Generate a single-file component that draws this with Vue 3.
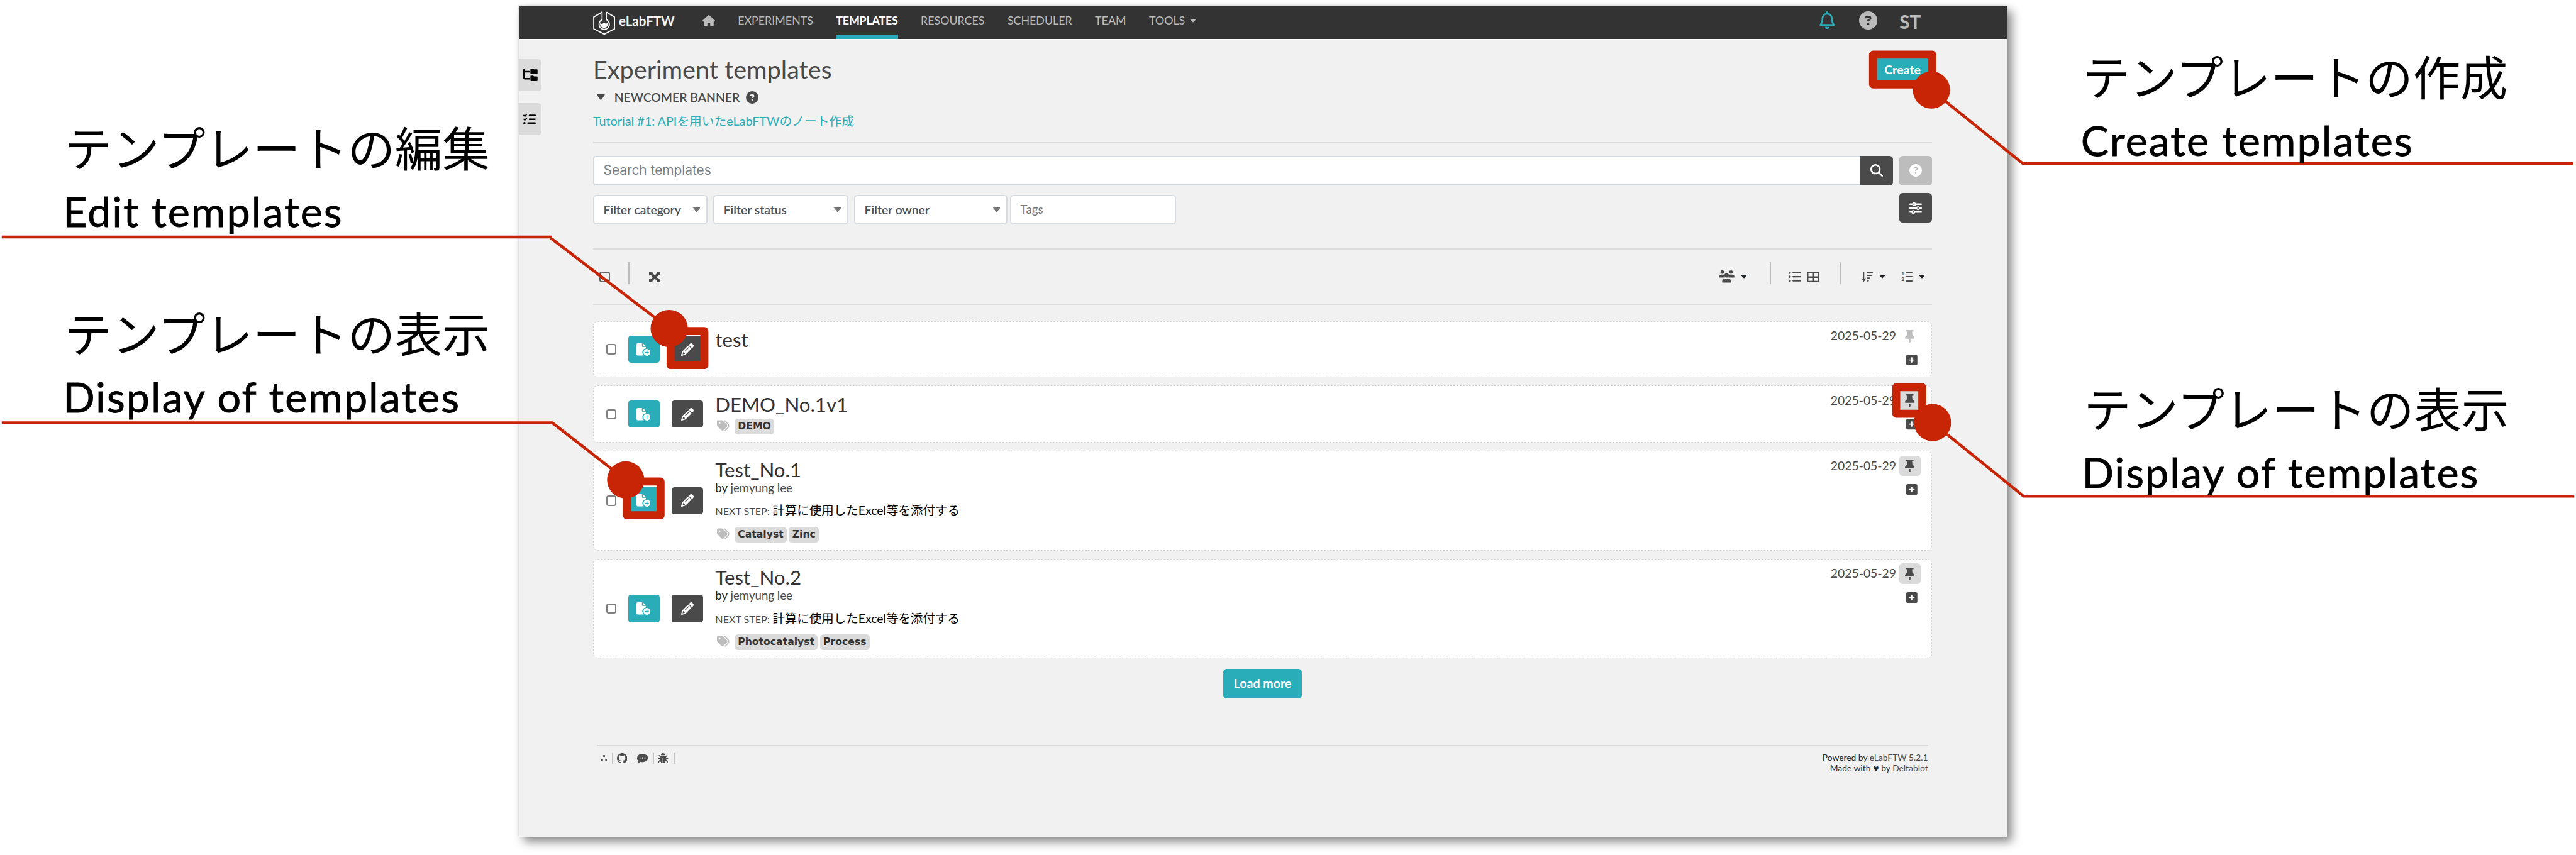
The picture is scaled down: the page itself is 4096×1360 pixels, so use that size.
<script setup>
import { h } from 'vue'

const paths = {
  home: ['0 0 576 512', 'M575.8 255.5c0 18-15 32.1-32 32.1l-32 0 .7 160.2c0 2.7-.2 5.4-.5 8.1l0 16.2c0 22.1-17.9 40-40 40l-16 0c-1.1 0-2.2 0-3.3-.1c-1.4 .1-2.8 .1-4.2 .1L416 512l-24 0c-22.1 0-40-17.9-40-40l0-24 0-64c0-17.7-14.3-32-32-32l-64 0c-17.7 0-32 14.3-32 32l0 64 0 24c0 22.1-17.9 40-40 40l-24 0-31.9 0c-1.5 0-3-.1-4.5-.2c-1.2 .1-2.4 .2-3.6 .2l-16 0c-22.1 0-40-17.9-40-40l0-112c0-.9 0-1.9 .1-2.8l0-69.7-32 0c-18 0-32-14-32-32.1c0-9 3-17 10-24L266.4 8c7-7 15-8 22-8s15 2 21 7L564.8 231.5c8 7 12 15 11 24z'],
  help: ['0 0 512 512', 'M256 512A256 256 0 1 0 256 0a256 256 0 1 0 0 512zM169.8 165.3c7.9-22.3 29.1-37.3 52.8-37.3l58.3 0c34.9 0 63.1 28.3 63.1 63.1c0 22.6-12.1 43.5-31.7 54.8L280 264.4c-.2 13-10.9 23.6-24 23.6c-13.3 0-24-10.7-24-24l0-13.5c0-8.6 4.6-16.5 12.1-20.8l44.3-25.4c4.7-2.7 7.6-7.7 7.6-13.1c0-8.4-6.8-15.1-15.1-15.1l-58.3 0c-3.4 0-6.4 2.1-7.5 5.3l-.4 1.2c-4.4 12.5-18.2 19-30.6 14.6s-19-18.2-14.6-30.6l.4-1.2zM224 352a32 32 0 1 1 64 0 32 32 0 1 1 -64 0z'],
  search: ['0 0 512 512', 'M416 208c0 45.9-14.9 88.3-40 122.7L502.6 457.4c12.5 12.5 12.5 32.8 0 45.3s-32.8 12.5-45.3 0L330.7 376c-34.4 25.2-76.8 40-122.7 40C93.1 416 0 322.9 0 208S93.1 0 208 0S416 93.1 416 208zM208 352a144 144 0 1 0 0-288 144 144 0 1 0 0 288z'],
  sliders: ['0 0 512 512', 'M0 416c0 17.7 14.3 32 32 32l54.7 0c12.3 28.3 40.5 48 73.3 48s61-19.7 73.3-48L480 448c17.7 0 32-14.3 32-32s-14.3-32-32-32l-246.7 0c-12.3-28.3-40.5-48-73.3-48s-61 19.7-73.3 48L32 384c-17.7 0-32 14.3-32 32zm128 0a32 32 0 1 1 64 0 32 32 0 1 1 -64 0zM320 256a32 32 0 1 1 64 0 32 32 0 1 1 -64 0zm32-80c-32.8 0-61 19.7-73.3 48L32 224c-17.7 0-32 14.3-32 32s14.3 32 32 32l246.7 0c12.3 28.3 40.5 48 73.3 48s61-19.7 73.3-48l54.7 0c17.7 0 32-14.3 32-32s-14.3-32-32-32l-54.7 0c-12.3-28.3-40.5-48-73.3-48zM192 128a32 32 0 1 1 0-64 32 32 0 1 1 0 64zm73.3-64C253 35.7 224.8 16 192 16s-61 19.7-73.3 48L32 64C14.3 64 0 78.3 0 96s14.3 32 32 32l86.7 0c12.3 28.3 40.5 48 73.3 48s61-19.7 73.3-48L480 128c17.7 0 32-14.3 32-32s-14.3-32-32-32L265.3 64z'],
  pin: ['0 0 384 512', 'M32 32C32 14.3 46.3 0 64 0H320c17.7 0 32 14.3 32 32s-14.3 32-32 32H290.5l11.4 148.2c36.7 19.9 65.7 53.2 79.5 94.7l1 3c3.3 9.8 1.6 20.5-4.4 28.8s-15.7 13.3-26 13.3H32c-10.3 0-19.9-4.9-26-13.3s-7.7-19.1-4.4-28.8l1-3c13.8-41.5 42.8-74.8 79.5-94.7L93.5 64H64C46.3 64 32 49.7 32 32zM160 384h64v96c0 17.7-14.3 32-32 32s-32-14.3-32-32V384z'],
  plus: ['0 32 448 448', 'M64 32C28.7 32 0 60.7 0 96V416c0 35.3 28.7 64 64 64H384c35.3 0 64-28.7 64-64V96c0-35.3-28.7-64-64-64H64zM200 344V280H136c-13.3 0-24-10.7-24-24s10.7-24 24-24h64V168c0-13.3 10.7-24 24-24s24 10.7 24 24v64h64c13.3 0 24 10.7 24 24s-10.7 24-24 24H248v64c0 13.3-10.7 24-24 24s-24-10.7-24-24z'],
  tags: ['0 22 512 470', 'M345 39.1L472.8 168.4c52.4 53 52.4 138.2 0 191.2L360.8 472.9c-9.3 9.4-24.5 9.5-33.9 .2s-9.5-24.5-.2-33.9L438.6 325.9c33.9-34.3 33.9-89.4 0-123.7L310.9 72.9c-9.3-9.4-9.2-24.6 .2-33.9s24.6-9.2 33.9 .2zM0 229.5V80C0 53.5 21.5 32 48 32H197.5c17 0 33.3 6.7 45.3 18.7l168 168c25 25 25 65.5 0 90.5L277.3 442.7c-25 25-65.5 25-90.5 0l-168-168C6.7 262.7 0 246.5 0 229.5zM144 144a32 32 0 1 0 -64 0 32 32 0 1 0 64 0z'],
  checks: ['0 32 512 448', 'M152.1 38.2c9.9 8.9 10.7 24 1.8 33.9l-72 80c-4.4 4.9-10.6 7.8-17.2 7.9s-12.9-2.4-17.6-7L7 113C-2.3 103.6-2.3 88.4 7 79s24.6-9.4 33.9 0l22.1 22.1 55.1-61.2c8.9-9.9 24-10.7 33.9-1.8zm0 160c9.9 8.9 10.7 24 1.8 33.9l-72 80c-4.4 4.9-10.6 7.8-17.2 7.9s-12.9-2.4-17.6-7L7 273c-9.4-9.4-9.4-24.6 0-33.9s24.6-9.4 33.9 0l22.1 22.1 55.1-61.2c8.9-9.9 24-10.7 33.9-1.8zM224 96c0-17.7 14.3-32 32-32H480c17.7 0 32 14.3 32 32s-14.3 32-32 32H256c-17.7 0-32-14.3-32-32zm0 160c0-17.7 14.3-32 32-32H480c17.7 0 32 14.3 32 32s-14.3 32-32 32H256c-17.7 0-32-14.3-32-32zM160 416c0-17.7 14.3-32 32-32H480c17.7 0 32 14.3 32 32s-14.3 32-32 32H192c-17.7 0-32-14.3-32-32zM48 368a48 48 0 1 1 0 96 48 48 0 1 1 0-96z'],
  tree: ['0 0 576 512', 'M64 32C64 14.3 49.7 0 32 0S0 14.3 0 32v96V384c0 35.3 28.7 64 64 64H256V384H64V160H256V96H64V32zM288 192c0 17.7 14.3 32 32 32H544c17.7 0 32-14.3 32-32V64c0-17.7-14.3-32-32-32H445.3c-8.5 0-16.6-3.4-22.6-9.4L409.4 9.4c-6-6-14.1-9.4-22.6-9.4H320c-17.7 0-32 14.3-32 32V192zm0 288c0 17.7 14.3 32 32 32H544c17.7 0 32-14.3 32-32V352c0-17.7-14.3-32-32-32H445.3c-8.5 0-16.6-3.4-22.6-9.4l-13.3-13.3c-6-6-14.1-9.4-22.6-9.4H320c-17.7 0-32 14.3-32 32V480z'],
  table: ['0 32 512 448', 'M448 96V224H288V96H448zm0 192V416H288V288H448zM224 224H64V96H224V224zM64 288H224V416H64V288zM64 32C28.7 32 0 60.7 0 96V416c0 35.3 28.7 64 64 64H448c35.3 0 64-28.7 64-64V96c0-35.3-28.7-64-64-64H64z'],
  pencil: ['0 0 512 512', 'M410.3 231l11.3-11.3-33.9-33.9-62.1-62.1L291.7 89.8l-11.3 11.3-22.6 22.6L58.6 322.9c-10.4 10.4-18 23.3-22.2 37.4L1 480.7c-2.5 8.4-.2 17.5 6.1 23.7s15.3 8.5 23.7 6.1l120.3-35.4c14.1-4.2 27-11.8 37.4-22.2L387.7 253.7 410.3 231zM160 399.4l-9.1 22.7c-4 3.1-8.5 5.4-13.3 6.9L59.4 452l23-78.1c1.4-4.9 3.8-9.4 6.9-13.3l22.7-9.1v32c0 8.8 7.2 16 16 16h32zM362.7 18.7L348.3 33.2 325.7 55.8 314.3 67.1l33.9 33.9 62.1 62.1 33.9 33.9 11.3-11.3 22.6-22.6 14.5-14.5c25-25 25-65.5 0-90.5L453.3 18.7c-25-25-65.5-25-90.5 0zm-47.4 168l-144 144c-6.2 6.2-16.4 6.2-22.6 0s-6.2-16.4 0-22.6l144-144c6.2-6.2 16.4-6.2 22.6 0s6.2 16.4 0 22.6z'],
  bell: ['0 0 448 512', 'M224 0c-17.7 0-32 14.3-32 32V51.2C119 66 64 130.6 64 208v25.4c0 45.4-15.5 89.5-43.8 124.9L5.3 377c-5.8 7.2-6.9 17.1-2.9 25.4S14.8 416 24 416H424c9.2 0 17.6-5.3 21.6-13.6s2.9-18.2-2.9-25.4l-14.9-18.6C399.5 322.9 384 278.8 384 233.4V208c0-77.4-55-142-128-156.8V32c0-17.7-14.3-32-32-32zm0 96c61.9 0 112 50.1 112 112v25.4c0 47.9 13.9 94.6 39.7 134.6H72.3C98.1 328 112 281.3 112 233.4V208c0-61.9 50.1-112 112-112zm64 352H224 160c0 17 6.7 33.3 18.7 45.3s28.3 18.7 45.3 18.7s33.3-6.7 45.3-18.7s18.7-28.3 18.7-45.3z'],
  github: ['0 0 16 16', 'M8 0C3.58 0 0 3.58 0 8c0 3.54 2.29 6.53 5.47 7.59.4.07.55-.17.55-.38 0-.19-.01-.82-.01-1.49-2.01.37-2.53-.49-2.69-.94-.09-.23-.48-.94-.82-1.13-.28-.15-.68-.52-.01-.53.63-.01 1.08.58 1.23.82.72 1.21 1.87.87 2.33.66.07-.52.28-.87.51-1.07-1.78-.2-3.64-.89-3.64-3.95 0-.87.31-1.59.82-2.15-.08-.2-.36-1.02.08-2.12 0 0 .67-.21 2.2.82.64-.18 1.32-.27 2-.27s1.36.09 2 .27c1.53-1.04 2.2-.82 2.2-.82.44 1.1.16 1.92.08 2.12.51.56.82 1.27.82 2.15 0 3.07-1.87 3.75-3.65 3.95.29.25.54.73.54 1.48 0 1.07-.01 1.93-.01 2.2 0 .21.15.46.55.38A8.01 8.01 0 0 0 16 8c0-4.42-3.58-8-8-8z'],
  expand: ['0 0 20 20', 'M1.5 0H7.500L5.700 2.400 10 6.900 14.300 2.400 12.500 0h6A1.500 1.500 0 0 1 20 1.500V7.500L17.600 5.700 13.100 10l4.500 4.300L20 12.500v6a1.500 1.500 0 0 1-1.500 1.500H12.500l1.800-2.400L10 13.100l-4.300 4.500L7.500 20H1.500A1.500 1.500 0 0 1 0 18.500V12.500l2.400 1.800L6.900 10 2.400 5.700 0 7.500V1.500A1.500 1.500 0 0 1 1.500 0z'],
  list: ['0 0 22 18', 'M2 0a2 2 0 1 1 0 4 2 2 0 1 1 0-4zM2 7a2 2 0 1 1 0 4 2 2 0 1 1 0-4zM2 14a2 2 0 1 1 0 4 2 2 0 1 1 0-4zM8 .8h12.800a1.200 1.200 0 0 1 0 2.400H8A1.200 1.200 0 0 1 8 .8zM8 7.800h12.800a1.200 1.200 0 0 1 0 2.400H8a1.200 1.200 0 0 1 0-2.400zM8 14.800h12.800a1.200 1.200 0 0 1 0 2.400H8a1.200 1.200 0 0 1 0-2.400z'],
  users: ['0 0 28 22', 'M6.200 0a3.100 3.100 0 1 1 0 6.200 3.100 3.100 0 1 1 0-6.200zM21.800 0a3.100 3.100 0 1 1 0 6.200 3.100 3.100 0 1 1 0-6.200zM14 5a4 4 0 1 1 0 8 4 4 0 1 1 0-8zM4.500 7.500h4c.3 0 .6 0 .8.2a5.500 5.500 0 0 0 1.500 5.300H1c-.6 0-1-.4-1-1a4.500 4.500 0 0 1 4.500-4.500zM19.500 7.500h4A4.500 4.500 0 0 1 28 12c0 .6-.4 1-1 1h-9.800a5.500 5.500 0 0 0 1.500-5.300c.2-.2.5-.2.800-.2zM11.500 14.500h5A5.500 5.500 0 0 1 22 20.500c0 .8-.6 1.500-1.400 1.500H7.400C6.600 22 6 21.300 6 20.500a5.500 5.500 0 0 1 5.500-6z'],
  sort: ['0 0 21 18', 'M4 0h1.800v13.200l2-2 1.200 1.300L4.900 18 .6 12.500 1.900 11.200 4 13.200zM11 .5h9a1 1 0 0 1 0 2.200h-9a1 1 0 0 1 0-2.200zM11 5.400h7a1 1 0 0 1 0 2.200h-7a1 1 0 0 1 0-2.200zM11 10.300h4.500a1 1 0 0 1 0 2.200H11a1 1 0 0 1 0-2.200zM11 15.200h1.800a1 1 0 0 1 0 2.200H11a1 1 0 0 1 0-2.200z'],
  file: ['0 0 26 22.500', 'M2.500 0H10v5a1.500 1.500 0 0 0 1.500 1.500H17v2.700a7 7 0 0 0-4.300 11.800c.3.400.6.700 1 1H2.500A2.500 2.500 0 0 1 0 19.500v-17A2.500 2.500 0 0 1 2.500 0zM11.500 0L17 5.300h-5a.6.6 0 0 1-.5-.6zM19 10a6.200 6.200 0 1 1 0 12.400A6.200 6.200 0 1 1 19 10zm-.7 2.600v2.900h-2.900v1.400h2.900v2.900h1.400v-2.900h2.900v-1.400h-2.900v-2.900z'],
  comment: ['0 0 20 17', 'M10 0C15.500 0 20 3.500 20 7.800s-4.500 7.800-10 7.800c-1.500 0-3-.3-4.200-.7C4.500 16 2.500 17 .3 17c.9-1 1.500-2.300 1.700-3.700A7 7 0 0 1 0 7.800C0 3.500 4.500 0 10 0zM5.500 6.500a1.300 1.300 0 1 0 0 2.600 1.300 1.300 0 1 0 0-2.600zM10 6.500a1.300 1.300 0 1 0 0 2.600 1.300 1.300 0 1 0 0-2.600zM14.500 6.500a1.300 1.300 0 1 0 0 2.600 1.300 1.300 0 1 0 0-2.600z'],
  bug: ['0 0 18 18', 'M9 0a3.400 3.400 0 0 1 3.400 3.600H5.600A3.400 3.400 0 0 1 9 0zM5.300 4.600h7.400l.9.600 1.900-2 1.200 1-2.300 2.700.4 1.500H18v1.600h-3.100l-.2 1.800 2.700 2.900v2.700h-1.700v-2l-1.700-1.700A5 5 0 0 1 9.700 17V8.200H8.300V17A5 5 0 0 1 4 13.700l-1.700 1.700v2H.6v-2.700l2.700-2.900-.2-1.800H0V8.400h3.200l.4-1.500-2.300-2.700 1.200-1 1.900 2z'],
  cubes: ['0 0 10 12', 'M3.600 0h2.800v3.600H3.600zM0 8h3v3.500H0zM7 8h3v3.500H7z'],
  caret: ['0 0 12 7', 'M.6 0h10.800c.5 0 .8.600.4 1L6.600 6.700a.8.800 0 0 1-1.200 0L.2 1C-.2.600.1 0 .6 0z'],
}

const Icon = (props) =>
  h('svg', { class: 'icon', viewBox: paths[props.name][0], width: props.w, height: props.h, fill: 'currentColor', preserveAspectRatio: 'none' },
    [h('path', { d: paths[props.name][1], 'fill-rule': 'evenodd' })])
Icon.props = ['name', 'w', 'h']

const nav = ['EXPERIMENTS', 'TEMPLATES', 'RESOURCES', 'SCHEDULER', 'TEAM']

const filters = [
  { text: 'Filter category', cls: 'f-cat' },
  { text: 'Filter status', cls: 'f-status' },
  { text: 'Filter owner', cls: 'f-owner' },
]

const step = '計算に使用したExcel等を添付する'
const templates = [
  { title: 'test', tags: [], pinned: false },
  { title: 'DEMO_No.1v1', tags: ['DEMO'], pinned: true },
  { title: 'Test_No.1', by: 'jemyung lee', step, tags: ['Catalyst', 'Zinc'], pinned: true },
  { title: 'Test_No.2', by: 'jemyung lee', step, tags: ['Photocatalyst', 'Process'], pinned: true },
]

const notes = [
  { cls: 'n-edit', ja: 'テンプレートの編集', en: 'Edit templates' },
  { cls: 'n-view', ja: 'テンプレートの表示', en: 'Display of templates' },
  { cls: 'n-create', ja: 'テンプレートの作成', en: 'Create templates' },
  { cls: 'n-pin', ja: 'テンプレートの表示', en: 'Display of templates' },
]
</script>

<template>
  <div class="stage">
    <div class="window">
      <header class="nav">
        <div class="brand">
          <svg class="icon" width="39" height="41" viewBox="0 0 39 41" fill="none" stroke="#fff" stroke-width="2">
            <path d="M15.500 1.500L1.200 10v20.500L19.500 40l18.300-9.500V10L23.500 1.500" />
            <path d="M15.800 1v13.500a9 9 0 1 0 7.400 0V1" stroke-width="1.800" />
            <path d="M12.500 20.500c1.500 1.500 3 1.800 4.500.8s1.500-3 3-3.300c-.6 2 .6 3.200 2.500 3.200s3-.5 4-1.500c1 5-2.500 9-7 9s-8-3.500-7-8.200z" fill="#fff" stroke="none" />
          </svg>
          <span class="brand-name">eLabFTW</span>
        </div>
        <Icon name="home" w="22" h="20" class="home" />
        <nav class="links">
          <a v-for="n in nav" :key="n" :class="['link', { active: n === 'TEMPLATES' }]">{{ n }}</a>
          <a class="link">TOOLS<Icon name="caret" w="11" h="6" class="tools-caret" /></a>
        </nav>
        <div class="nav-right">
          <Icon name="bell" w="27" h="31" class="bell" />
          <Icon name="help" w="32" h="32" />
          <span class="user">ST</span>
        </div>
      </header>

      <div class="body">
        <aside class="side">
          <div class="tab"><Icon name="tree" w="25" h="22" /></div>
          <div class="tab"><Icon name="checks" w="22" h="19" /></div>
        </aside>

        <main class="main">
          <div class="head">
            <h1>Experiment templates</h1>
            <button class="btn create">Create</button>
          </div>
          <div class="banner">
            <Icon name="caret" w="14" h="10" />
            <span class="banner-text">NEWCOMER BANNER</span>
            <Icon name="help" w="22" h="22" />
          </div>
          <a class="tutorial">Tutorial #1: APIを用いたeLabFTWのノート作成</a>
          <div class="rule r1"></div>

          <div class="search">
            <div class="search-input">Search templates</div>
            <div class="sq search-btn"><Icon name="search" w="22" h="22" /></div>
            <div class="sq help-btn"><Icon name="help" w="22" h="22" /></div>
          </div>

          <div class="filters">
            <div v-for="f in filters" :key="f.text" :class="['field', f.cls]">
              <span>{{ f.text }}</span><Icon name="caret" w="12.500" h="8" class="grey" />
            </div>
            <div class="field f-tags">Tags</div>
            <div class="sq slide-btn"><Icon name="sliders" w="22" h="22" /></div>
          </div>
          <div class="rule r2"></div>

          <div class="tools">
            <span class="check big"></span>
            <i class="sep s1"></i>
            <Icon name="expand" w="20" h="19" />
            <div class="tools-right">
              <Icon name="users" w="27.500" h="21.500" /><Icon name="caret" w="11" h="6" class="drop" />
              <i class="sep s2"></i>
              <Icon name="list" w="21.500" h="18" /><Icon name="table" w="21.500" h="19" class="tbl" />
              <i class="sep s3"></i>
              <Icon name="sort" w="21" h="18" /><Icon name="caret" w="11" h="6" class="drop" />
              <span class="ol">
                <span class="ol-num"><b>1</b><b>2</b></span>
                <span class="ol-lines"><i></i><i></i><i></i></span>
              </span>
              <Icon name="caret" w="11" h="6" class="drop" />
            </div>
          </div>
          <div class="rule"></div>

          <div class="cards">
            <article v-for="t in templates" :key="t.title" class="card">
              <span class="check"></span>
              <div class="act teal"><Icon name="file" w="25" h="22" /></div>
              <div class="act dark"><Icon name="pencil" w="22" h="22" /></div>
              <div class="info">
                <div class="title">{{ t.title }}</div>
                <div v-if="t.by" class="by">by <span>{{ t.by }}</span></div>
                <div v-if="t.step" class="step"><small>NEXT STEP:</small>{{ t.step }}</div>
                <div v-if="t.tags.length" :class="['tags', { far: t.step }]">
                  <Icon name="tags" w="21.500" h="20" class="tag-icon" />
                  <span v-for="g in t.tags" :key="g" class="tag">{{ g }}</span>
                </div>
              </div>
              <div class="meta">
                <div class="meta-top">
                  <span class="date">2025-05-29</span>
                  <span :class="['pin', { on: t.pinned }]"><Icon name="pin" w="16.500" h="22" /></span>
                </div>
                <Icon name="plus" w="19.500" h="19" class="plus" />
              </div>
            </article>
          </div>

          <button class="btn more">Load more</button>

          <footer class="footer">
            <div class="foot-icons">
              <Icon name="cubes" w="10" h="11" />
              <i></i><Icon name="github" w="18" h="18" />
              <i></i><Icon name="comment" w="19" h="16" />
              <i></i><Icon name="bug" w="18" h="18" />
              <i></i>
            </div>
            <div class="foot-text">
              <div>Powered by <span>eLabFTW 5.2.1</span></div>
              <div>Made with <b class="heart">♥</b> by <span>Deltablot</span></div>
            </div>
          </footer>
        </main>
      </div>
    </div>

    <svg class="marks" width="4500" height="1494" viewBox="0 0 4500 1494" fill="none" stroke="#c72506">
      <g stroke-width="5">
        <path d="M3 414.200H964.500M962 416L1169 574" />
        <path d="M3 739H965L1093 838.500" />
        <path d="M4495 286H3534L3374 157.300" />
        <path d="M4497 867H3535L3376 738.500" />
      </g>
      <g stroke-width="14" stroke-linejoin="round">
        <rect x="1171.500" y="578.500" width="59" height="59.500" />
        <rect x="1095" y="841.500" width="59" height="59" />
        <rect x="3272" y="95.500" width="103.500" height="52" />
        <rect x="3312.500" y="676.700" width="45.500" height="46.300" />
      </g>
      <g fill="#c72506" stroke="none">
        <circle cx="1169" cy="574" r="32.500" />
        <circle cx="1093" cy="838.500" r="32.500" />
        <circle cx="3374" cy="157.300" r="32.500" />
        <circle cx="3376" cy="738.500" r="32.500" />
      </g>
    </svg>
    <div v-for="n in notes" :key="n.cls" :class="['note', n.cls]">
      <div class="ja">{{ n.ja }}</div>
      <div class="en">{{ n.en }}</div>
    </div>
  </div>
</template>

<style>
html, body { background: #fff; overflow: hidden; }
</style>

<style scoped>
.stage {
  position: relative;
  width: 4500px;
  height: 1494px;
  zoom: 0.910222;
  background: #fff;
  overflow: hidden;
  font-family: Lato, "Noto Sans CJK JP", sans-serif;
  color: #212529;
}
.stage * { box-sizing: border-box; }
.icon { display: block; flex: none; }
.window {
  width: 2599.500px;
  height: 1452.500px;
  margin: 9.500px 0 0 906px;
  background: #f1f1f1;
  box-shadow: 9px 9px 16px rgba(0, 0, 0, 0.46), 0 0 4px rgba(0, 0, 0, 0.14);
}
.nav {
  display: flex;
  height: 59.500px;
  padding: 0 150px 0 130px;
  background: #333;
  border-bottom: 1.200px solid #fff;
  color: #bbb;
}
.brand { display: flex; width: 191px; padding-top: 10px; }
.brand-name { margin: 5.200px 0 0 6px; font-size: 22.600px; line-height: 26px; font-weight: 700; color: #f4f4f4; }
.home { margin: 17px 40px 0 0; }
.links { display: flex; gap: 40px; }
.link { display: flex; height: 58.500px; font-size: 19.600px; line-height: 24px; padding-top: 15px; }
.link.active { color: #fff; font-weight: 700; letter-spacing: -0.200px; border-bottom: 8px solid #29aeb9; }
.tools-caret { margin: 9px 0 0 9px; }
.nav-right { display: flex; margin-left: auto; padding-top: 10px; gap: 41px; }
.bell { color: #29aeb9; margin-right: 1px; }
.user { font-size: 32.500px; line-height: 38px; font-weight: 700; margin-left: -2px; }

.body { display: flex; }
.side { width: 130px; padding-top: 34px; display: flex; flex-direction: column; gap: 21px; color: #000; }
.tab { width: 40px; height: 56px; padding-left: 8px; display: flex; align-items: center; background: #dbdbdb; border-radius: 0 6px 6px 0; }
.main { width: 2339px; padding-top: 25px; display: flex; flex-direction: column; color: #4a4a4a; }
.head { display: flex; justify-content: space-between; height: 52px; }
h1 { margin: 0; font-size: 43.500px; line-height: 52px; font-weight: 400; }
.btn { border: 0; background: #29aeb9; color: #fff; font: 700 21.500px/26px Lato, sans-serif; padding: 0; border-radius: 6px; }
.create { width: 103px; height: 52px; margin-top: 2px; }
.banner { display: flex; align-items: center; height: 26px; margin-top: 11.300px; padding-left: 6.500px; }
.banner-text { font-size: 21.300px; line-height: 26px; font-weight: 600; margin: 0 11px 0 16.500px; }
.tutorial { margin-top: 15.700px; font-size: 21.700px; line-height: 26px; color: #29aeb9; white-space: nowrap; }
.rule { height: 2px; background: #dcdcdc; flex: none; }
.r1 { margin: 23.700px 0 21.600px; }
.search { display: flex; height: 51.500px; }
.search-input { flex: 1; background: #fff; border: 2.200px solid #d3d8dd; border-right: 0; border-radius: 5px 0 0 5px; padding-left: 16px; font: 400 22.900px/47px Inter, sans-serif; color: #777f87; }
.sq { width: 57px; height: 52px; display: flex; align-items: center; justify-content: center; color: #fff; background: #4a4a4a; border-radius: 6px; }
.search-btn { border-radius: 0 6px 6px 0; }
.help-btn { background: #bdbdbd; margin-left: 11px; }
.filters { display: flex; margin-top: 13.500px; height: 54.700px; }
.field { display: flex; justify-content: space-between; align-items: center; height: 51.700px; margin-top: 3px; padding: 0 11px 0 16px; background: #fff; border: 2.200px solid #d5dae0; border-radius: 6px; font-size: 21.200px; font-weight: 600; color: #495057; }
.grey { color: #777; }
.f-cat { width: 200px; margin-right: 10px; }
.f-status { width: 236.500px; margin-right: 9.500px; }
.f-owner { width: 268px; margin-right: 4.500px; }
.f-tags { width: 290px; color: #777; font-size: 20.500px; font-weight: 400; }
.slide-btn { margin-left: auto; }
.r2 { margin-top: 42.500px; }
.tools { display: flex; align-items: center; height: 94.500px; padding: 0 12px 0 11px; }
.check { width: 18px; height: 18px; border: 2.200px solid #808080; border-radius: 4px; background: #fff; flex: none; }
.big { width: 19px; height: 19px; background: transparent; border-color: #666; }
.sep { width: 1.500px; height: 38px; background: #bcbcbc; }
.s1 { margin: 0 34px 13px 32px; }
.tools-right { display: flex; align-items: center; margin-left: auto; }
.drop { margin-left: 11px; color: #212529; }
.s2 { margin: 0 31px 13px 40px; }
.tbl { margin-left: 10px; }
.s3 { margin: 0 35px 13px 37px; }
.ol { display: flex; gap: 2px; margin-left: 27.500px; }
.ol-num { display: flex; flex-direction: column; width: 5px; font-size: 9px; line-height: 10px; }
.ol-lines { display: flex; flex-direction: column; justify-content: space-between; width: 12.500px; padding: 2px 0 1.500px; }
.ol-lines i { height: 2.300px; background: #4a4a4a; border-radius: 1px; }

.cards { display: flex; flex-direction: column; gap: 14.500px; margin-top: 28.500px; }
.card { display: flex; align-items: center; min-height: 98px; padding: 0 19px 0 21.500px; background: #fff; border: 1.200px dashed #d2d2d2; border-radius: 8px; }
.act { width: 54.500px; height: 47.700px; display: flex; align-items: center; justify-content: center; border-radius: 5px; color: #fff; flex: none; }
.teal { background: #29aeb9; margin-left: 21px; }
.dark { background: #4a4a4a; margin-left: 21.500px; }
.info { flex: 1; align-self: stretch; margin-left: 21.500px; padding: 10.200px 0 13.200px; }
.title { font-size: 34.300px; line-height: 42px; color: #333; }
.by { font-size: 20.500px; line-height: 24px; color: #212529; }
.by span { color: #4a4a4a; }
.step { margin-top: 7px; height: 40px; font-size: 21.400px; line-height: 40px; color: #000; white-space: nowrap; }
.step small { font-size: 17.700px; line-height: 20px; color: #4a4a4a; margin-right: 5px; }
.tags { display: flex; align-items: center; height: 27.400px; margin-top: 4.700px; }
.far { margin-top: 8px; }
.tag-icon { color: #bdbdbd; margin: 0 9px 3px 3px; }
.tag { height: 27.400px; padding: 0 6px; margin-right: 3.500px; border-radius: 6px; background: #dbdbdb; color: #333; font: 700 17.200px/27px "DejaVu Sans", sans-serif; }
.meta { display: flex; flex-direction: column; align-items: flex-end; align-self: stretch; padding-top: 7px; color: #4a4a4a; }
.meta-top { display: flex; height: 36px; }
.date { font-size: 21.300px; line-height: 35px; margin-right: 5px; }
.pin { width: 37.500px; height: 36px; display: flex; align-items: center; justify-content: center; border-radius: 6px; color: #bdbdbd; }
.pin.on { background: #dbdbdb; color: #4a4a4a; }
.plus { margin: 14px 5px 0 0; }

.more { align-self: center; width: 137px; height: 52px; margin-top: 18px; }
.footer { display: flex; justify-content: space-between; margin: 81px 7px 0; padding-top: 12px; border-top: 2.200px solid #dcdcdc; }
.foot-icons { display: flex; align-items: center; height: 19px; padding-left: 7px; }
.foot-icons i { width: 1.500px; height: 19px; background: #c4c4c4; margin: 0 6.500px 0 9.500px; }
.foot-text { font-size: 15.200px; line-height: 18px; text-align: right; color: #212529; }
.foot-text span { color: #4a4a4a; }
.heart { font: 400 12px/12px "DejaVu Sans", sans-serif; }

.marks { position: absolute; left: 0; top: 0; }
.note { position: absolute; color: #000; white-space: nowrap; }
.ja { font: 400 82.800px/105px "Noto Sans CJK JP", sans-serif; }
.en { font: 400 73px/105px Lato, sans-serif; margin: 7.500px 0 0 -3px; letter-spacing: 2.200px; -webkit-text-stroke: 0.900px #000; }
.n-edit { left: 113px; top: 203.700px; }
.n-view { left: 113px; top: 527.700px; }
.n-create { left: 3638px; top: 79.500px; }
.n-pin { left: 3640px; top: 659.500px; }
</style>
